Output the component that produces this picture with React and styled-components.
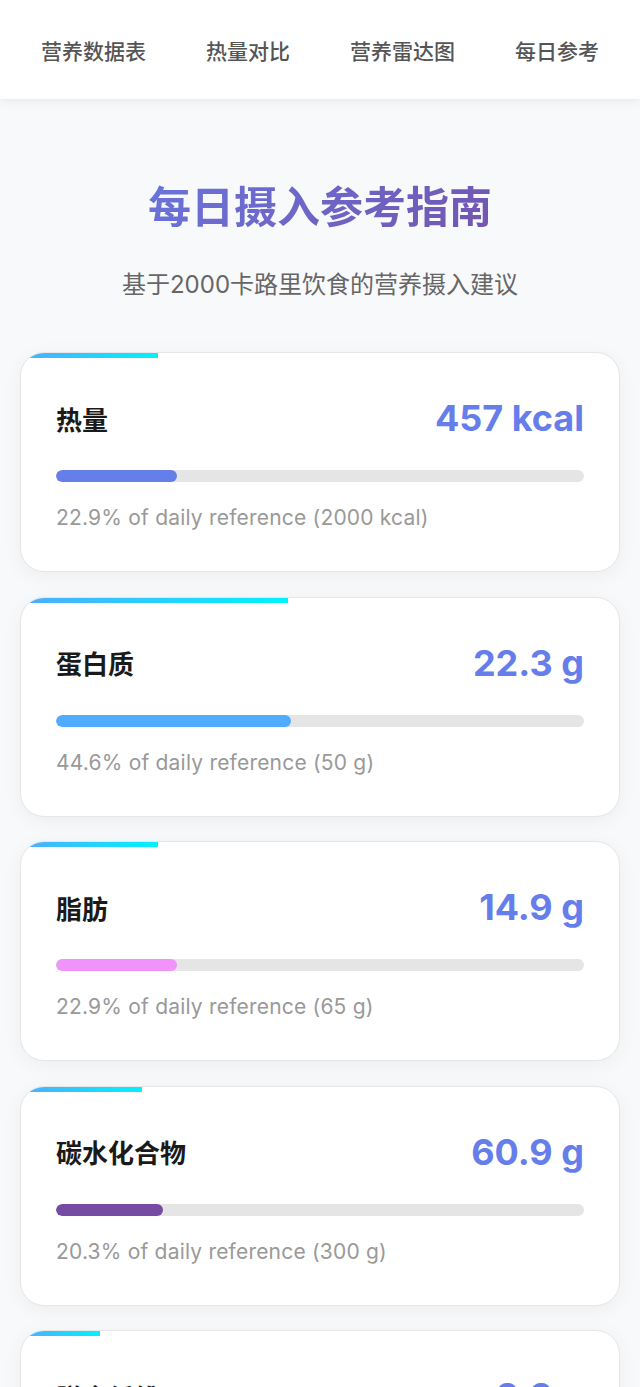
import React from "react";
import styled, { createGlobalStyle } from "styled-components";

const GlobalStyle = createGlobalStyle`
  body {
    margin: 0;
    background: #f8f9fa;
    font-family: Inter, "Noto Sans CJK SC", sans-serif;
  }
`;

const Header = styled.div`
  height: 99px;
  display: flex;
  justify-content: center;
  align-items: center;
  gap: 60px;
  background: #ffffff;
  box-shadow: 0 2px 10px rgba(0, 0, 0, 0.08);
`;

const NavLink = styled.span`
  font-size: 21px;
  font-weight: 500;
  color: #555;
  font-family: "Noto Sans CJK SC", sans-serif;
`;

const Main = styled.div`
  padding: 79px 20px 40px;
`;

const Title = styled.h1`
  margin: 0;
  text-align: center;
  font-size: 43px;
  line-height: 52px;
  font-weight: 700;
  font-family: "Noto Sans CJK SC", sans-serif;
  background: linear-gradient(135deg, #667eea 0%, #764ba2 100%);
  -webkit-background-clip: text;
  background-clip: text;
  color: transparent;
`;

const Subtitle = styled.p`
  margin: 38px 0 50px;
  text-align: center;
  font-size: 24px;
  line-height: 34px;
  color: #666;
`;

const CardList = styled.div`
  display: flex;
  flex-direction: column;
  gap: 24.5px;
`;

const Card = styled.div`
  position: relative;
  overflow: hidden;
  background: #ffffff;
  border: 1px solid #e6e6e6;
  border-radius: 24px;
  padding: 43px 35px 38px;
  box-shadow: 0 4px 20px rgba(0, 0, 0, 0.05);
`;

const Accent = styled.div`
  position: absolute;
  top: 0;
  left: 0;
  height: 5px;
  background: linear-gradient(90deg, #4facfe 0%, #00f2fe 100%);
`;

const CardHead = styled.div`
  display: flex;
  justify-content: space-between;
  align-items: center;
  height: 44px;
`;

const Name = styled.span`
  font-size: 26px;
  font-weight: 700;
  color: #1a1a1a;
  font-family: "Noto Sans CJK SC", sans-serif;
`;

const Value = styled.span`
  font-size: 36px;
  font-weight: 700;
  color: #667eea;
`;

const Track = styled.div`
  margin-top: 30px;
  height: 12px;
  border-radius: 6px;
  background: #e5e5e5;
  overflow: hidden;
`;

const Fill = styled.div`
  height: 100%;
  border-radius: 6px;
  background: ${({ color }) => color};
`;

const Note = styled.div`
  margin-top: 21px;
  font-size: 21px;
  letter-spacing: 0.2px;
  line-height: 30px;
  color: #999;
`;

const nutrients = [
  { name: "热量", value: "457 kcal", pct: 22.9, ref: "2000 kcal", color: "#667eea" },
  { name: "蛋白质", value: "22.3 g", pct: 44.6, ref: "50 g", color: "#4facfe" },
  { name: "脂肪", value: "14.9 g", pct: 22.9, ref: "65 g", color: "#f093fb" },
  { name: "碳水化合物", value: "60.9 g", pct: 20.3, ref: "300 g", color: "#764ba2" },
  { name: "膳食纤维", value: "3.3 g", pct: 13.2, ref: "25 g", color: "#43e97b" },
];

export default function App() {
  return (
    <>
      <GlobalStyle />
      <Header>
        <NavLink>营养数据表</NavLink>
        <NavLink>热量对比</NavLink>
        <NavLink>营养雷达图</NavLink>
        <NavLink>每日参考</NavLink>
      </Header>
      <Main>
        <Title>每日摄入参考指南</Title>
        <Subtitle>基于2000卡路里饮食的营养摄入建议</Subtitle>
        <CardList>
          {nutrients.map((n) => (
            <Card key={n.name}>
              <Accent style={{ width: `${n.pct}%` }} />
              <CardHead>
                <Name>{n.name}</Name>
                <Value>{n.value}</Value>
              </CardHead>
              <Track>
                <Fill color={n.color} style={{ width: `${n.pct}%` }} />
              </Track>
              <Note>
                {n.pct}% of daily reference ({n.ref})
              </Note>
            </Card>
          ))}
        </CardList>
      </Main>
    </>
  );
}
